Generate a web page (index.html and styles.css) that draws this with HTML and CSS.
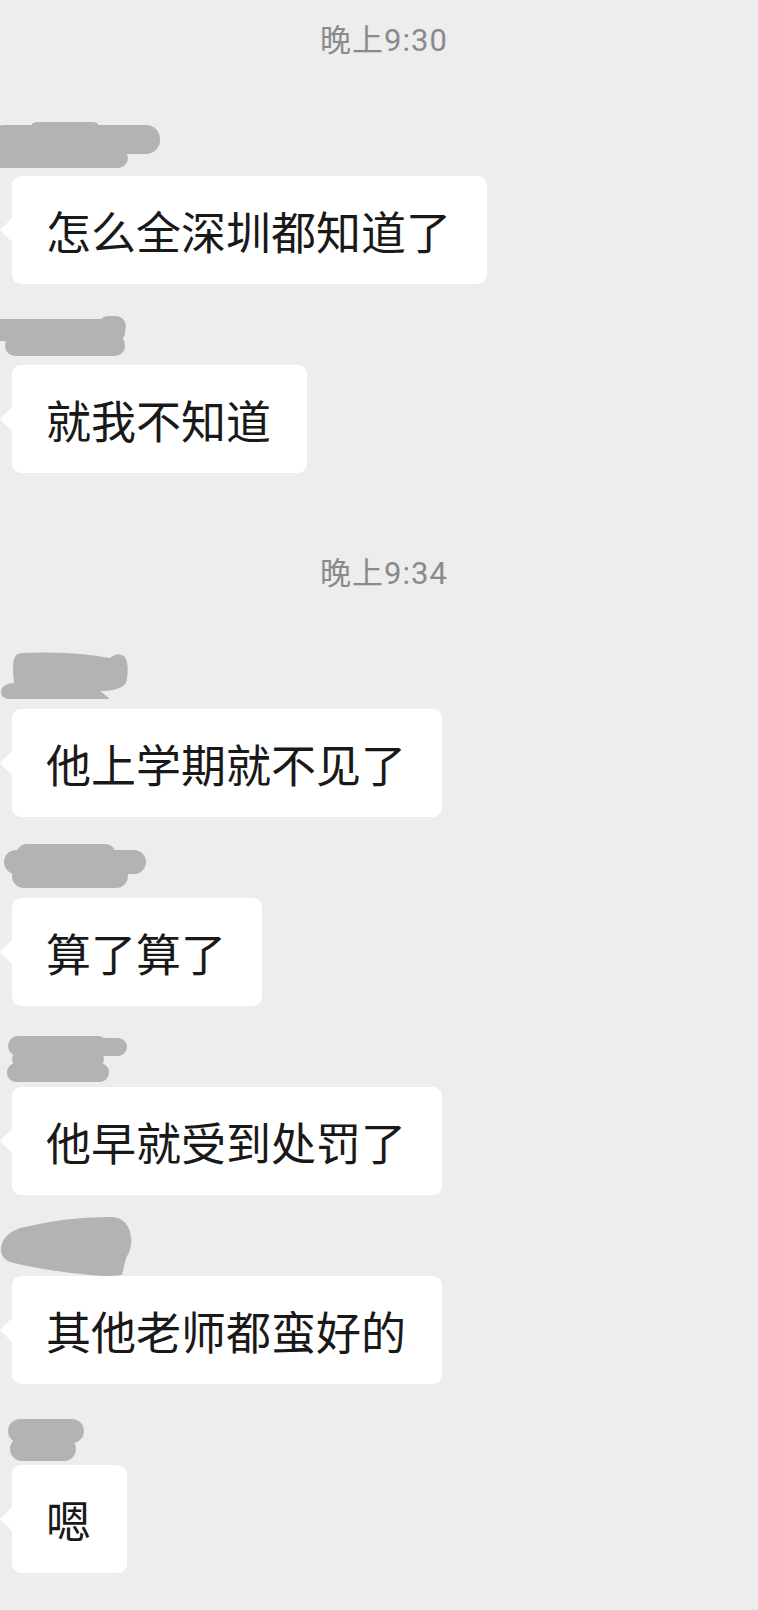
FILE: index.html
```html
<!DOCTYPE html>
<html lang="zh-CN">
<head>
    <meta charset="UTF-8">
    <meta name="viewport" content="width=device-width, initial-scale=1.0">
    <title>聊天记录</title>
    <link rel="stylesheet" href="styles.css">
</head>
<body>

    <div class="chat">
        <div class="time first">晚上9:30</div>

        <div class="msg">
            <div class="name">
                <svg width="170" height="48" viewBox="0 0 170 48" overflow="visible">
                    <rect x="-10" y="-3" width="170" height="29" rx="14" fill="#b3b3b3"/>
                    <rect x="30" y="-6" width="70" height="14" rx="7" fill="#b3b3b3"/>
                    <rect x="-10" y="20" width="138" height="20" rx="10" fill="#b3b3b3"/>
                </svg>
            </div>
            <div class="bubble">怎么全深圳都知道了</div>
        </div>

        <div class="msg">
            <div class="name">
                <svg width="170" height="48" viewBox="0 0 170 48" overflow="visible">
                    <rect x="-10" y="2" width="135" height="22" rx="8" fill="#b3b3b3"/>
                    <rect x="98" y="-1" width="28" height="20" rx="10" fill="#b3b3b3"/>
                    <rect x="5" y="18" width="120" height="21" rx="10" fill="#b3b3b3"/>
                </svg>
            </div>
            <div class="bubble">就我不知道</div>
        </div>

        <div class="time">晚上9:34</div>

        <div class="msg">
            <div class="name">
                <svg width="170" height="48" viewBox="0 0 170 48" overflow="visible">
                    <path d="M22 -8 Q70 -10 110 -3 Q118 -10 125 -4 Q130 5 126 22 Q120 30 100 30 L110 38 L8 38 Q0 36 1 30 Q3 22 14 22 Q12 5 14 -2 Q16 -8 22 -8 Z" fill="#b3b3b3"/>
                </svg>
            </div>
            <div class="bubble">他上学期就不见了</div>
        </div>

        <div class="msg">
            <div class="name">
                <svg width="170" height="48" viewBox="0 0 170 48" overflow="visible">
                    <rect x="16" y="-6" width="100" height="22" rx="11" fill="#b3b3b3"/>
                    <rect x="4" y="0" width="142" height="24" rx="12" fill="#b3b3b3"/>
                    <rect x="12" y="14" width="116" height="24" rx="12" fill="#b3b3b3"/>
                </svg>
            </div>
            <div class="bubble">算了算了</div>
        </div>

        <div class="msg">
            <div class="name">
                <svg width="170" height="48" viewBox="0 0 170 48" overflow="visible">
                    <rect x="8" y="-3" width="100" height="20" rx="10" fill="#b3b3b3"/>
                    <rect x="95" y="-1" width="32" height="18" rx="9" fill="#b3b3b3"/>
                    <rect x="12" y="10" width="92" height="20" rx="10" fill="#b3b3b3"/>
                    <rect x="7" y="24" width="102" height="19" rx="9" fill="#b3b3b3"/>
                </svg>
            </div>
            <div class="bubble">他早就受到处罚了</div>
        </div>

        <div class="msg">
            <div class="name">
                <svg width="170" height="48" viewBox="0 0 170 48" overflow="visible">
                    <path d="M20 0 Q70 -12 112 -11 Q126 -10 130 4 Q134 18 126 30 L122 47 Q110 49 90 47 Q40 42 10 34 Q0 30 1 20 Q3 6 20 0 Z" fill="#b3b3b3"/>
                </svg>
            </div>
            <div class="bubble">其他老师都蛮好的</div>
        </div>

        <div class="msg">
            <div class="name">
                <svg width="170" height="48" viewBox="0 0 170 48" overflow="visible">
                    <rect x="8" y="2" width="76" height="24" rx="12" fill="#b3b3b3"/>
                    <rect x="10" y="20" width="66" height="24" rx="12" fill="#b3b3b3"/>
                </svg>
            </div>
            <div class="bubble">嗯</div>
        </div>
    </div>

</body>
</html>
```

FILE: styles.css
```css
body {
    background-color: #ededed;
    margin: 0;
    padding: 0;
    font-family: "Noto Sans CJK SC", "Noto Sans", sans-serif;
}
.chat {
    display: flex;
    flex-direction: column;
    align-items: flex-start;
    padding-bottom: 40px;
}
.time {
    align-self: center;
    margin: 54px 0 73px 10px;
    font-family: Roboto, "Noto Sans CJK SC", sans-serif;
    font-size: 31px;
    line-height: 28px;
    letter-spacing: 1px;
    color: #8a8a8a;
}
.time.first {
    margin-top: 27px;
}
.msg {
    display: flex;
    flex-direction: column;
    align-items: flex-start;
    margin-bottom: 33px;
}
.name {
    height: 48px;
}
.name svg {
    display: block;
}
.bubble {
    position: relative;
    margin-left: 12px;
    height: 108px;
    display: flex;
    align-items: center;
    padding: 0 36px 0 34px;
    background-color: #fff;
    border-radius: 9px;
    font-size: 45px;
    color: #191919;
}
.bubble:before {
    content: "";
    position: absolute;
    left: -12px;
    top: 50%;
    margin-top: -12px;
    border-top: 12px solid transparent;
    border-bottom: 12px solid transparent;
    border-right: 12px solid #fff;
}
```
